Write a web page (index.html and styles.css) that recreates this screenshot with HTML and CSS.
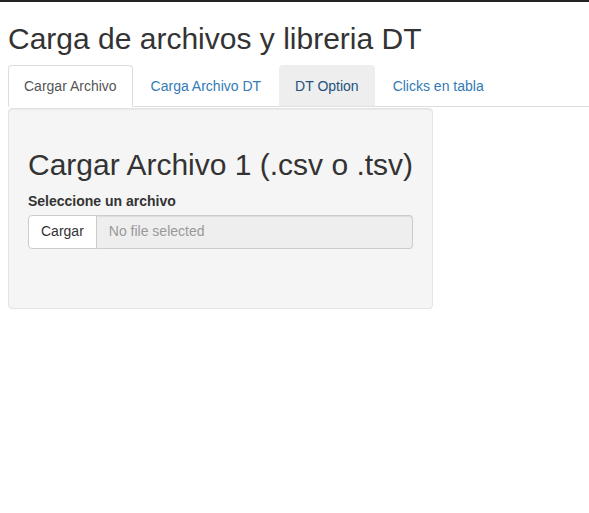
FILE: index.html
```html
<!DOCTYPE html>
<html lang="es">
<head>
<meta charset="utf-8">
<title>Carga de archivos y libreria DT</title>
<link rel="stylesheet" href="styles.css">
</head>
<body>
<div class="topbar"></div>
<div class="container">
  <h2 class="title">Carga de archivos y libreria DT</h2>
  <ul class="nav-tabs">
    <li class="tab active"><a>Cargar Archivo</a></li>
    <li class="tab"><a>Carga Archivo DT</a></li>
    <li class="tab hover"><a>DT Option</a></li>
    <li class="tab"><a>Clicks en tabla</a></li>
  </ul>
  <div class="well">
    <h2 class="panel-title">Cargar Archivo 1 (.csv o .tsv)</h2>
    <div class="form-group">
      <label class="label">Seleccione un archivo</label>
      <div class="input-group">
        <span class="btn">Cargar</span>
        <span class="file-name">No file selected</span>
      </div>
    </div>
  </div>
</div>
</body>
</html>
```
FILE: styles.css
```css
* { box-sizing: border-box; }
html, body { margin: 0; padding: 0; background: #fff; }
body {
  font-family: "Liberation Sans", Arial, Helvetica, sans-serif;
  font-size: 14px;
  line-height: 1.42857;
  color: #333;
}
.topbar { height: 2px; background: #222; }
.container { padding: 0 0 0 8px; }
.title {
  margin: 20px 0 10px;
  font-size: 30px;
  font-weight: 500;
  line-height: 1.1;
}
.nav-tabs {
  list-style: none;
  margin: 0;
  padding: 0;
  display: flex;
  border-bottom: 1px solid #ddd;
}
.tab { margin-bottom: -1px; }
.tab a {
  display: block;
  margin-right: 2px;
  padding: 10px 15px;
  line-height: 20px;
  border: 1px solid transparent;
  border-radius: 4px 4px 0 0;
  color: #337ab7;
}
.tab.active a {
  color: #555;
  background: #fff;
  border-color: #ddd #ddd transparent;
}
.tab.hover a {
  color: #23527c;
  background: #eee;
  border-color: #eee #eee #ddd;
}
.well {
  width: 425px;
  height: 201px;
  margin-top: 1px;
  padding: 19px 19px 40px;
  background: #f5f5f5;
  border: 1px solid #e3e3e3;
  border-radius: 4px;
  box-shadow: inset 0 1px 1px rgba(0,0,0,.05);
}
.panel-title {
  margin: 20px 0 10px;
  font-size: 30px;
  font-weight: 500;
  line-height: 1.1;
  white-space: nowrap;
}
.label {
  display: block;
  margin-bottom: 4px;
  font-weight: 700;
  font-size: 14px;
  line-height: 20px;
}
.input-group { display: flex; height: 34px; }
.btn {
  display: flex;
  align-items: center;
  padding: 6px 12px;
  background: #fff;
  color: #333;
  border: 1px solid #ccc;
  border-radius: 4px 0 0 4px;
}
.file-name {
  flex: 1;
  display: flex;
  align-items: center;
  padding: 6px 12px;
  background: #eee;
  color: #999;
  border: 1px solid #ccc;
  border-left: 0;
  border-radius: 0 4px 4px 0;
  box-shadow: inset 0 1px 1px rgba(0,0,0,.075);
}
```
